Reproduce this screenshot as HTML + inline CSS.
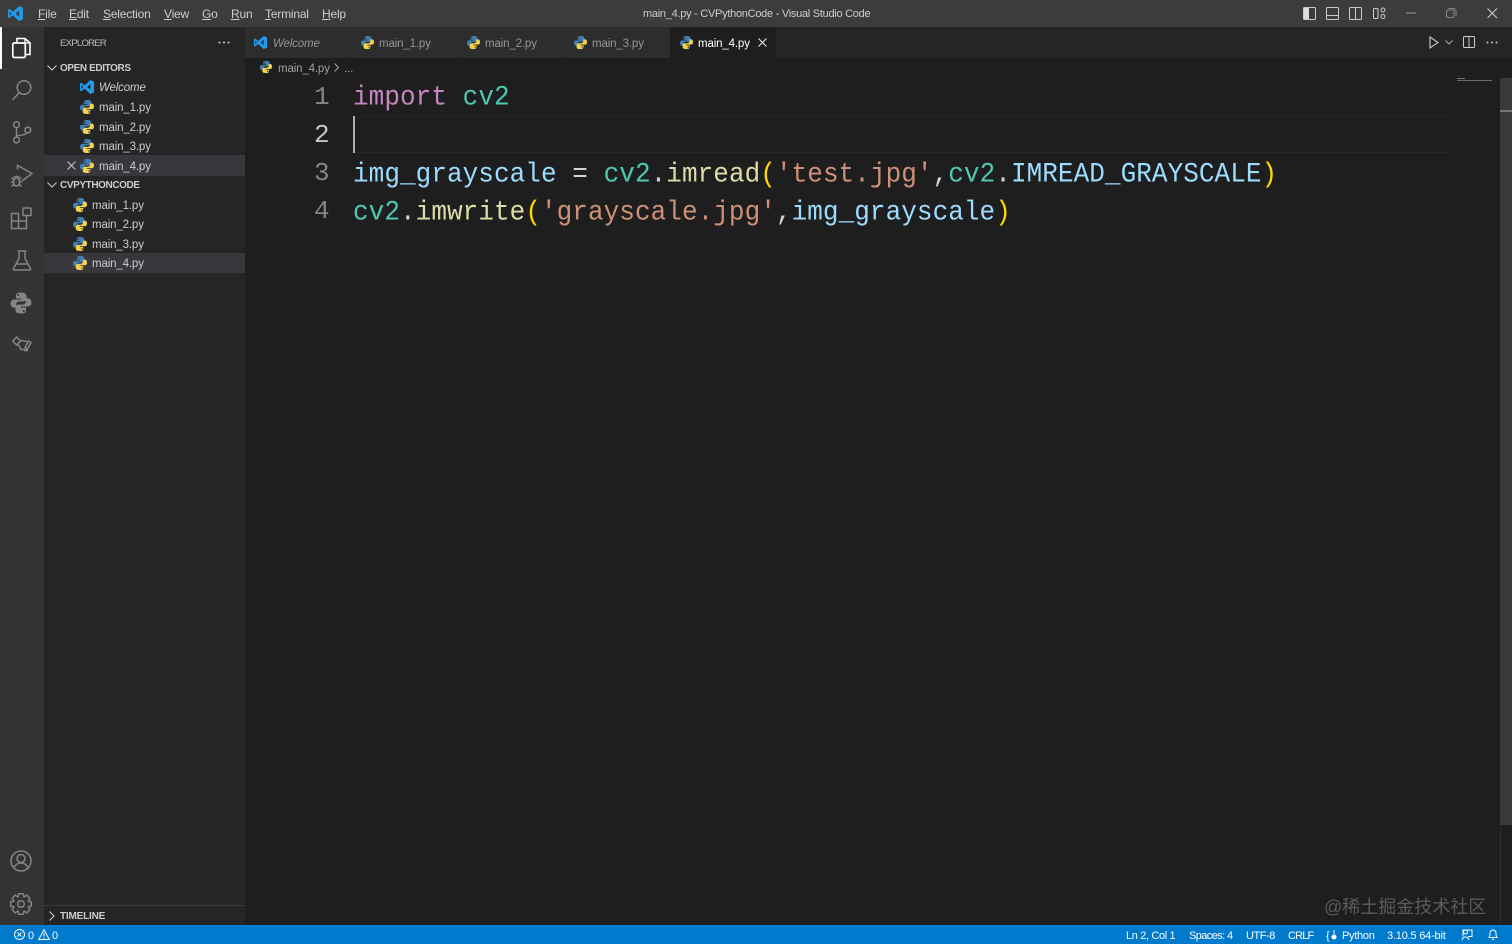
<!DOCTYPE html>
<html><head><meta charset="utf-8"><title>main_4.py - CVPythonCode - Visual Studio Code</title>
<style>
html,body{margin:0;padding:0;width:1512px;height:944px;overflow:hidden;background:#1e1e1e}
body{position:relative;font-family:"Liberation Sans",sans-serif;font-size:11.5px;color:#ccc;filter:blur(.3px)}
.b{position:absolute}
.t{position:absolute;white-space:pre;line-height:16px;letter-spacing:-.14px}
.m{color:#ccc;font-size:12px;top:6px;letter-spacing:-.2px}
.h{font-weight:700;font-size:10px;color:#ccc;letter-spacing:-.4px}
.c{position:absolute;left:353px;font-family:"Liberation Mono",monospace;font-size:26px;letter-spacing:.06px;line-height:38px;white-space:pre;color:#d4d4d4;transform:scaleY(1.05)}
.n{position:absolute;font-family:"Liberation Mono",monospace;font-size:26px;line-height:38px;color:#858585;left:314px}
.kw{color:#c586c0}.cl{color:#4ec9b0}.v{color:#9cdcfe}.f{color:#dcdcaa}.s{color:#ce9178}.y{color:#ffd700}
.st{position:absolute;top:928px;color:#fff;font-size:11px;line-height:16px;white-space:pre;letter-spacing:-.28px}
svg{position:absolute;overflow:visible}
.a{fill:none;stroke:#858585;stroke-width:1.5}
u{text-underline-offset:1px;text-decoration-thickness:1px}
</style></head><body>
<svg width="0" height="0" style="left:0;top:0"><defs>
<symbol id="py" viewBox="0 0 16 16">
<path fill="#3f7fb5" d="M7.900 1C5.200 1 4.800 2 4.800 3.300V5h3.400v.7H3.300C1.900 5.700 1 6.700 1 8.500c0 1.900.9 2.900 2.200 2.900H5V9.500c0-1.300 1-2.300 2.300-2.300h3c1 0 1.900-.9 1.900-1.900V3.100C12.200 1.700 10.700 1 7.900 1zM6.100 2.300a.7.7 0 1 1 0 1.400.7.7 0 0 1 0-1.400z"/>
<path fill="#f2d14e" d="M8.100 15c2.700 0 3.100-1 3.100-2.300V11H7.800v-.7h4.900c1.400 0 2.300-1 2.300-2.800 0-1.900-.9-2.900-2.200-2.900H11v1.900c0 1.300-1 2.300-2.300 2.300h-3c-1 0-1.900.9-1.900 1.900v2.200C3.800 14.300 5.300 15 8.100 15zM9.900 13.700a.7.7 0 1 1 0-1.400.7.7 0 0 1 0 1.400z"/>
</symbol>
<symbol id="vs" viewBox="0 0 16 16">
<path fill="#1f9cf0" d="M11.400 1 15 2.600v10.800L11.400 15 5.600 9.600 2.300 12.200 1 11.500V4.500l1.300-.7 3.300 2.600zM11.400 5 8 8l3.400 3zM2.400 6v4L4.300 8z"/>
</symbol>
<polyline id="tooth" points="-2.800,-6.800 -2.300,-10.300 2.300,-10.300 2.800,-6.800" fill="none" stroke="#858585" stroke-width="1.500" stroke-linejoin="round"/>
</defs></svg>

<!-- Title bar -->
<div class="b" style="left:0;top:0;width:1512px;height:27px;background:#3c3c3c"></div>
<svg style="left:7px;top:5px" width="17" height="17"><use href="#vs" width="17" height="17"/></svg>
<div class="t m" style="left:38px"><u>F</u>ile</div>
<div class="t m" style="left:69px"><u>E</u>dit</div>
<div class="t m" style="left:103px"><u>S</u>election</div>
<div class="t m" style="left:164px"><u>V</u>iew</div>
<div class="t m" style="left:202px"><u>G</u>o</div>
<div class="t m" style="left:231px"><u>R</u>un</div>
<div class="t m" style="left:265px"><u>T</u>erminal</div>
<div class="t m" style="left:322px"><u>H</u>elp</div>
<div class="t" style="left:643px;top:6px;color:#cccccc;font-size:11px;letter-spacing:-.27px">main_4.py - CVPythonCode - Visual Studio Code</div>
<svg style="left:1303px;top:7px" width="14" height="14"><rect x=".5" y=".5" width="12" height="12" rx="1" fill="none" stroke="#ccc"/><rect x="1" y="1" width="5" height="11" fill="#ddd"/></svg>
<svg style="left:1326px;top:7px" width="14" height="14"><rect x=".5" y=".5" width="12" height="12" rx="1" fill="none" stroke="#ccc"/><path d="M1 8.500h11" stroke="#ccc"/></svg>
<svg style="left:1349px;top:7px" width="14" height="14"><rect x=".5" y=".5" width="12" height="12" rx="1" fill="none" stroke="#ccc"/><path d="M6.500 1v11" stroke="#ccc"/></svg>
<svg style="left:1373px;top:7px" width="14" height="14"><rect x=".5" y="1.500" width="4.500" height="10" rx="1" fill="none" stroke="#ccc"/><rect x="8" y="1" width="4" height="4" rx="2" fill="none" stroke="#ccc"/><rect x="8" y="7.500" width="4" height="4" rx="2" fill="none" stroke="#ccc"/></svg>
<svg style="left:1406px;top:12px" width="10" height="3"><path d="M0 1h10" stroke="#999"/></svg>
<svg style="left:1446px;top:8px" width="11" height="11"><rect x=".5" y="2" width="7.500" height="7.500" rx="1.500" fill="none" stroke="#888"/><path d="M2.500 .5h5a2.500 2.500 0 0 1 2.500 2.500v5" fill="none" stroke="#888"/></svg>
<svg style="left:1487px;top:8px" width="11" height="11"><path d="M.5.500l9.500 9.500M10 .5L.5 10" stroke="#ccc" stroke-width="1.100"/></svg>

<!-- Activity bar -->
<div class="b" style="left:0;top:27px;width:44px;height:898px;background:#333"></div>
<div class="b" style="left:0;top:27px;width:2px;height:42px;background:#fff"></div>
<svg style="left:11px;top:37px" width="22" height="22"><path fill="none" stroke="#fff" stroke-width="1.600" d="M6 5V1.500h8L19 6v11.500h-4.500"/><rect x="1.800" y="6" width="12.500" height="14.500" rx="1.500" fill="#333" stroke="#fff" stroke-width="1.700"/><path fill="none" stroke="#fff" stroke-width="1.300" d="M14 1.500V6h5"/></svg>
<svg style="left:11px;top:79px" width="22" height="22"><circle class="a" cx="13" cy="8.500" r="6.800" stroke-width="1.600"/><path class="a" d="M8.300 13.500 1.500 21" stroke-width="1.700"/></svg>
<svg style="left:11px;top:121px" width="22" height="22"><circle class="a" cx="5.500" cy="3.700" r="2.900"/><circle class="a" cx="5.500" cy="19" r="2.900"/><circle class="a" cx="16.800" cy="9" r="2.900"/><path class="a" d="M5.500 6.700v9.300M5.500 14.500c7 0 9.500-1.500 10.500-2.800"/></svg>
<svg style="left:10px;top:164px" width="24" height="24"><path class="a" d="M7.500 5.500 7.500 1.500 22 9.500 12 17"/><ellipse class="a" cx="6.500" cy="18" rx="3" ry="4"/><path class="a" d="M4 13.500c.5-1.500 4.500-1.500 5 0M1.500 13.500l2.500 2M11.500 13.500l-2.500 2M1 18h2.500M12 18H9.500M1.500 22.500l2.500-2M11.500 22.500l-2.500-2"/></svg>
<svg style="left:10px;top:207px" width="24" height="24"><path class="a" d="M1.500 6.500h7v15h-7zM1.500 14h15v7.500H8.500M8.500 6.500V14H16.500V9"/><rect class="a" x="13" y="1" width="8" height="7.500" rx=".5"/></svg>
<svg style="left:12px;top:250px" width="20" height="21"><path class="a" d="M5.500 1h9M7 1v7.500L1.500 18.500a1 1 0 0 0 1 1.500h15a1 1 0 0 0 1-1.500L13 8.500V1M4.500 14h11"/></svg>
<svg style="left:10px;top:292px" width="22" height="22"><path fill="#858585" d="M10.700 .5C6.200.5 6 2.300 6 4.200V6.500h5v1H4.200C2 7.500.5 9.100.5 11.500s1.500 4.200 3.500 4.200h2v-2.900c0-2 1.600-3.300 3.500-3.300h4.300c1.500 0 2.700-1.100 2.700-2.700V3.600C16 1.700 14.500.5 10.700.5zM8.200 2a1 1 0 1 1 0 2 1 1 0 0 1 0-2z"/><path fill="#858585" d="M11.300 21.500c4.500 0 4.700-1.800 4.700-3.700V15.500h-5v-1h6.800c2.200 0 3.700-1.600 3.700-4s-1.500-4.200-3.500-4.200h-2v2.900c0 2-1.600 3.300-3.500 3.300H8.200c-1.500 0-2.700 1.100-2.700 2.700v3.200c0 1.900 1.500 3.100 5.800 3.100zM13.800 20a1 1 0 1 1 0-2 1 1 0 0 1 0 2z"/></svg>
<svg style="left:12px;top:336px" width="20" height="20"><path class="a" stroke-width="1.400" d="M.8 5 4.600 1 8.500 5 4.600 9zM6 8l3 5.500h6M9 4.500l6 1"/><path class="a" stroke-width="1.400" d="M13 11.500 16.500 5l2.500 1.500-3.500 6.500zM12 14.500h4"/></svg>
<svg style="left:10px;top:850px" width="22" height="22"><circle class="a" cx="11" cy="11" r="10" stroke-width="1.600"/><circle class="a" cx="11" cy="8.500" r="4" stroke-width="1.600"/><path class="a" stroke-width="1.600" d="M3.800 18c1-3 4-5 7.200-5s6.200 2 7.200 5"/></svg>
<svg style="left:21px;top:904px" width="1" height="1"><use href="#tooth"/><use href="#tooth" transform="rotate(45)"/><use href="#tooth" transform="rotate(90)"/><use href="#tooth" transform="rotate(135)"/><use href="#tooth" transform="rotate(180)"/><use href="#tooth" transform="rotate(225)"/><use href="#tooth" transform="rotate(270)"/><use href="#tooth" transform="rotate(315)"/><circle class="a" r="3.300" stroke-width="1.600"/></svg>

<!-- Sidebar -->
<div class="b" style="left:44px;top:27px;width:201px;height:898px;background:#252526"></div>
<div class="t" style="left:60px;top:36px;color:#bbb;font-size:9.6px;letter-spacing:-.8px">EXPLORER</div>
<svg style="left:218px;top:41px" width="13" height="3"><circle cx="1.500" cy="1.500" r="1" fill="#ccc"/><circle cx="6" cy="1.500" r="1" fill="#ccc"/><circle cx="10.500" cy="1.500" r="1" fill="#ccc"/></svg>
<svg style="left:47px;top:65px" width="10" height="6"><path d="M.5.500 5 5 9.500.5" fill="none" stroke="#ccc"/></svg>
<div class="t h" style="left:60px;top:61px">OPEN EDITORS</div>
<svg style="left:79px;top:79px" width="16" height="16"><use href="#vs" width="16" height="16"/></svg>
<div class="t" style="left:99px;top:80px;font-style:italic;color:#ccc">Welcome</div>
<svg style="left:79px;top:99px" width="16" height="16"><use href="#py" width="16" height="16"/></svg>
<div class="t" style="left:99px;top:100px">main_1.py</div>
<svg style="left:79px;top:119px" width="16" height="16"><use href="#py" width="16" height="16"/></svg>
<div class="t" style="left:99px;top:120px">main_2.py</div>
<svg style="left:79px;top:138px" width="16" height="16"><use href="#py" width="16" height="16"/></svg>
<div class="t" style="left:99px;top:139px">main_3.py</div>
<div class="b" style="left:44px;top:155px;width:201px;height:21px;background:#37373d"></div>
<svg style="left:67px;top:161px" width="9" height="9"><path d="M.5.500l8 8M8.500.5l-8 8" stroke="#ccc"/></svg>
<svg style="left:79px;top:158px" width="16" height="16"><use href="#py" width="16" height="16"/></svg>
<div class="t" style="left:99px;top:159px">main_4.py</div>
<svg style="left:47px;top:182px" width="10" height="6"><path d="M.5.500 5 5 9.500.5" fill="none" stroke="#ccc"/></svg>
<div class="t h" style="left:60px;top:178px">CVPYTHONCODE</div>
<svg style="left:72px;top:197px" width="16" height="16"><use href="#py" width="16" height="16"/></svg>
<div class="t" style="left:92px;top:198px">main_1.py</div>
<svg style="left:72px;top:216px" width="16" height="16"><use href="#py" width="16" height="16"/></svg>
<div class="t" style="left:92px;top:217px">main_2.py</div>
<svg style="left:72px;top:236px" width="16" height="16"><use href="#py" width="16" height="16"/></svg>
<div class="t" style="left:92px;top:237px">main_3.py</div>
<div class="b" style="left:44px;top:253px;width:201px;height:20px;background:#37373d"></div>
<svg style="left:72px;top:255px" width="16" height="16"><use href="#py" width="16" height="16"/></svg>
<div class="t" style="left:92px;top:256px">main_4.py</div>
<div class="b" style="left:44px;top:905px;width:201px;height:1px;background:#3c3c3c"></div>
<svg style="left:49px;top:911px" width="6" height="10"><path d="M.5.500 5 5 .5 9.500" fill="none" stroke="#ccc"/></svg>
<div class="t h" style="left:60px;top:909px;letter-spacing:-.2px">TIMELINE</div>

<!-- Tabs -->
<div class="b" style="left:245px;top:27px;width:1267px;height:31px;background:#252526"></div>
<div class="b" style="left:245px;top:27px;width:425px;height:31px;background:#2d2d2d"></div>
<div class="b" style="left:350px;top:27px;width:1px;height:31px;background:#292929"></div>
<div class="b" style="left:456px;top:27px;width:1px;height:31px;background:#292929"></div>
<div class="b" style="left:563px;top:27px;width:1px;height:31px;background:#292929"></div>
<div class="b" style="left:670px;top:27px;width:106px;height:31px;background:#1e1e1e"></div>
<svg style="left:253px;top:35px" width="15" height="15"><use href="#vs" width="15" height="15"/></svg>
<div class="t" style="left:273px;top:36px;font-style:italic;color:#969696">Welcome</div>
<svg style="left:360px;top:35px" width="15" height="15"><use href="#py" width="15" height="15"/></svg>
<div class="t" style="left:379px;top:36px;color:#969696">main_1.py</div>
<svg style="left:466px;top:35px" width="15" height="15"><use href="#py" width="15" height="15"/></svg>
<div class="t" style="left:485px;top:36px;color:#969696">main_2.py</div>
<svg style="left:573px;top:35px" width="15" height="15"><use href="#py" width="15" height="15"/></svg>
<div class="t" style="left:592px;top:36px;color:#969696">main_3.py</div>
<svg style="left:679px;top:35px" width="15" height="15"><use href="#py" width="15" height="15"/></svg>
<div class="t" style="left:698px;top:36px;color:#fff">main_4.py</div>
<svg style="left:758px;top:38px" width="9" height="9"><path d="M.5.500l8 8M8.500.5l-8 8" stroke="#e8e8e8" stroke-width="1.100"/></svg>
<svg style="left:1429px;top:36px" width="10" height="13"><path d="M1 1 9 6.500 1 12z" fill="none" stroke="#ccc" stroke-width="1.100"/></svg>
<svg style="left:1445px;top:40px" width="8" height="5"><path d="M.5.500 4 4 7.500.5" fill="none" stroke="#aaa"/></svg>
<svg style="left:1463px;top:36px" width="13" height="13"><rect x=".5" y=".5" width="11" height="11" rx="1" fill="none" stroke="#ccc"/><path d="M6 1v10" stroke="#ccc"/></svg>
<svg style="left:1486px;top:41px" width="13" height="3"><circle cx="1.500" cy="1.500" r="1" fill="#ccc"/><circle cx="6" cy="1.500" r="1" fill="#ccc"/><circle cx="10.500" cy="1.500" r="1" fill="#ccc"/></svg>

<!-- Breadcrumb -->
<svg style="left:259px;top:60px" width="14" height="14"><use href="#py" width="14" height="14"/></svg>
<div class="t" style="left:278px;top:61px;color:#a0a0a0">main_4.py</div>
<svg style="left:334px;top:63px" width="5" height="9"><path d="M.5.500 4.500 4.500 .5 8.500" fill="none" stroke="#a0a0a0"/></svg>
<div class="t" style="left:344px;top:61px;color:#a0a0a0">...</div>

<!-- Editor -->
<div class="b" style="left:353px;top:116px;width:1099px;height:1px;background:#282828"></div>
<div class="b" style="left:353px;top:152px;width:1099px;height:1px;background:#282828"></div>
<div class="b" style="left:353px;top:116px;width:2px;height:37px;background:#aeafad"></div>
<div class="n" style="top:78px">1</div>
<div class="n" style="top:116px;color:#c6c6c6">2</div>
<div class="n" style="top:154px">3</div>
<div class="n" style="top:192px">4</div>
<div class="c" style="top:78px"><span class="kw">import</span> <span class="cl">cv2</span></div>
<div class="c" style="top:155px"><span class="v">img_grayscale</span> = <span class="cl">cv2</span>.<span class="f">imread</span><span class="y">(</span><span class="s">'test.jpg'</span>,<span class="cl">cv2</span>.<span class="v">IMREAD_GRAYSCALE</span><span class="y">)</span></div>
<div class="c" style="top:193px"><span class="cl">cv2</span>.<span class="f">imwrite</span><span class="y">(</span><span class="s">'grayscale.jpg'</span>,<span class="v">img_grayscale</span><span class="y">)</span></div>

<!-- Minimap & scrollbar -->
<div class="b" style="left:1457px;top:78px;width:8px;height:1px;background:#777"></div>
<div class="b" style="left:1457px;top:80px;width:35px;height:1px;background:#6a6a6a"></div>
<div class="b" style="left:1500px;top:78px;width:12px;height:747px;background:#3a3a3a"></div>
<div class="b" style="left:1500px;top:110px;width:12px;height:2px;background:#777"></div>
<div class="b" style="left:1500px;top:825px;width:1px;height:100px;background:#2d2d2d"></div>

<!-- Watermark -->
<div class="t" style="left:1324px;top:895px;color:#5b5b5b;font-family:'Liberation Sans','Noto Sans CJK SC',sans-serif;font-size:18px;line-height:24px;letter-spacing:0">@稀土掘金技术社区</div>

<!-- Status bar -->
<div class="b" style="left:0;top:925px;width:1512px;height:19px;background:#007acc"></div>
<svg style="left:14px;top:929px" width="11" height="11"><circle cx="5.500" cy="5.500" r="5" fill="none" stroke="#fff"/><path d="M3.500 3.500l4 4M7.500 3.500l-4 4" stroke="#fff"/></svg>
<div class="st" style="left:28px">0</div>
<svg style="left:38px;top:929px" width="12" height="11"><path d="M6 .8 11.300 10.500H.7z" fill="none" stroke="#fff"/><path d="M6 4v3.500M6 8.500v1" stroke="#fff"/></svg>
<div class="st" style="left:52px">0</div>
<div class="st" style="left:1126px;letter-spacing:-.36px">Ln 2, Col 1</div>
<div class="st" style="left:1189px;letter-spacing:-.6px">Spaces: 4</div>
<div class="st" style="left:1246px;letter-spacing:-.45px">UTF-8</div>
<div class="st" style="left:1288px;letter-spacing:-.85px">CRLF</div>
<div class="st" style="left:1326px">{</div>
<svg style="left:1331px;top:930px" width="6" height="10"><path d="M3 0v4" stroke="#fff"/><circle cx="3" cy="7" r="2.500" fill="#fff"/></svg>
<div class="st" style="left:1342px">Python</div>
<div class="st" style="left:1387px;letter-spacing:-.2px">3.10.5 64-bit</div>
<svg style="left:1461px;top:929px" width="12" height="12"><path d="M2 7.500V1h9v6.500H7M4.500 5a2 2 0 1 0-.1 0zM1 11c.5-2 1.500-3 3.500-3s3 1 3.500 3" fill="none" stroke="#fff"/></svg>
<svg style="left:1488px;top:929px" width="10" height="12"><path d="M1 8.500c1-1 1-2.500 1-4.500a3 3 0 0 1 6 0c0 2 0 3.500 1 4.500zM4 10.500h2" fill="none" stroke="#fff"/></svg>
</body></html>
